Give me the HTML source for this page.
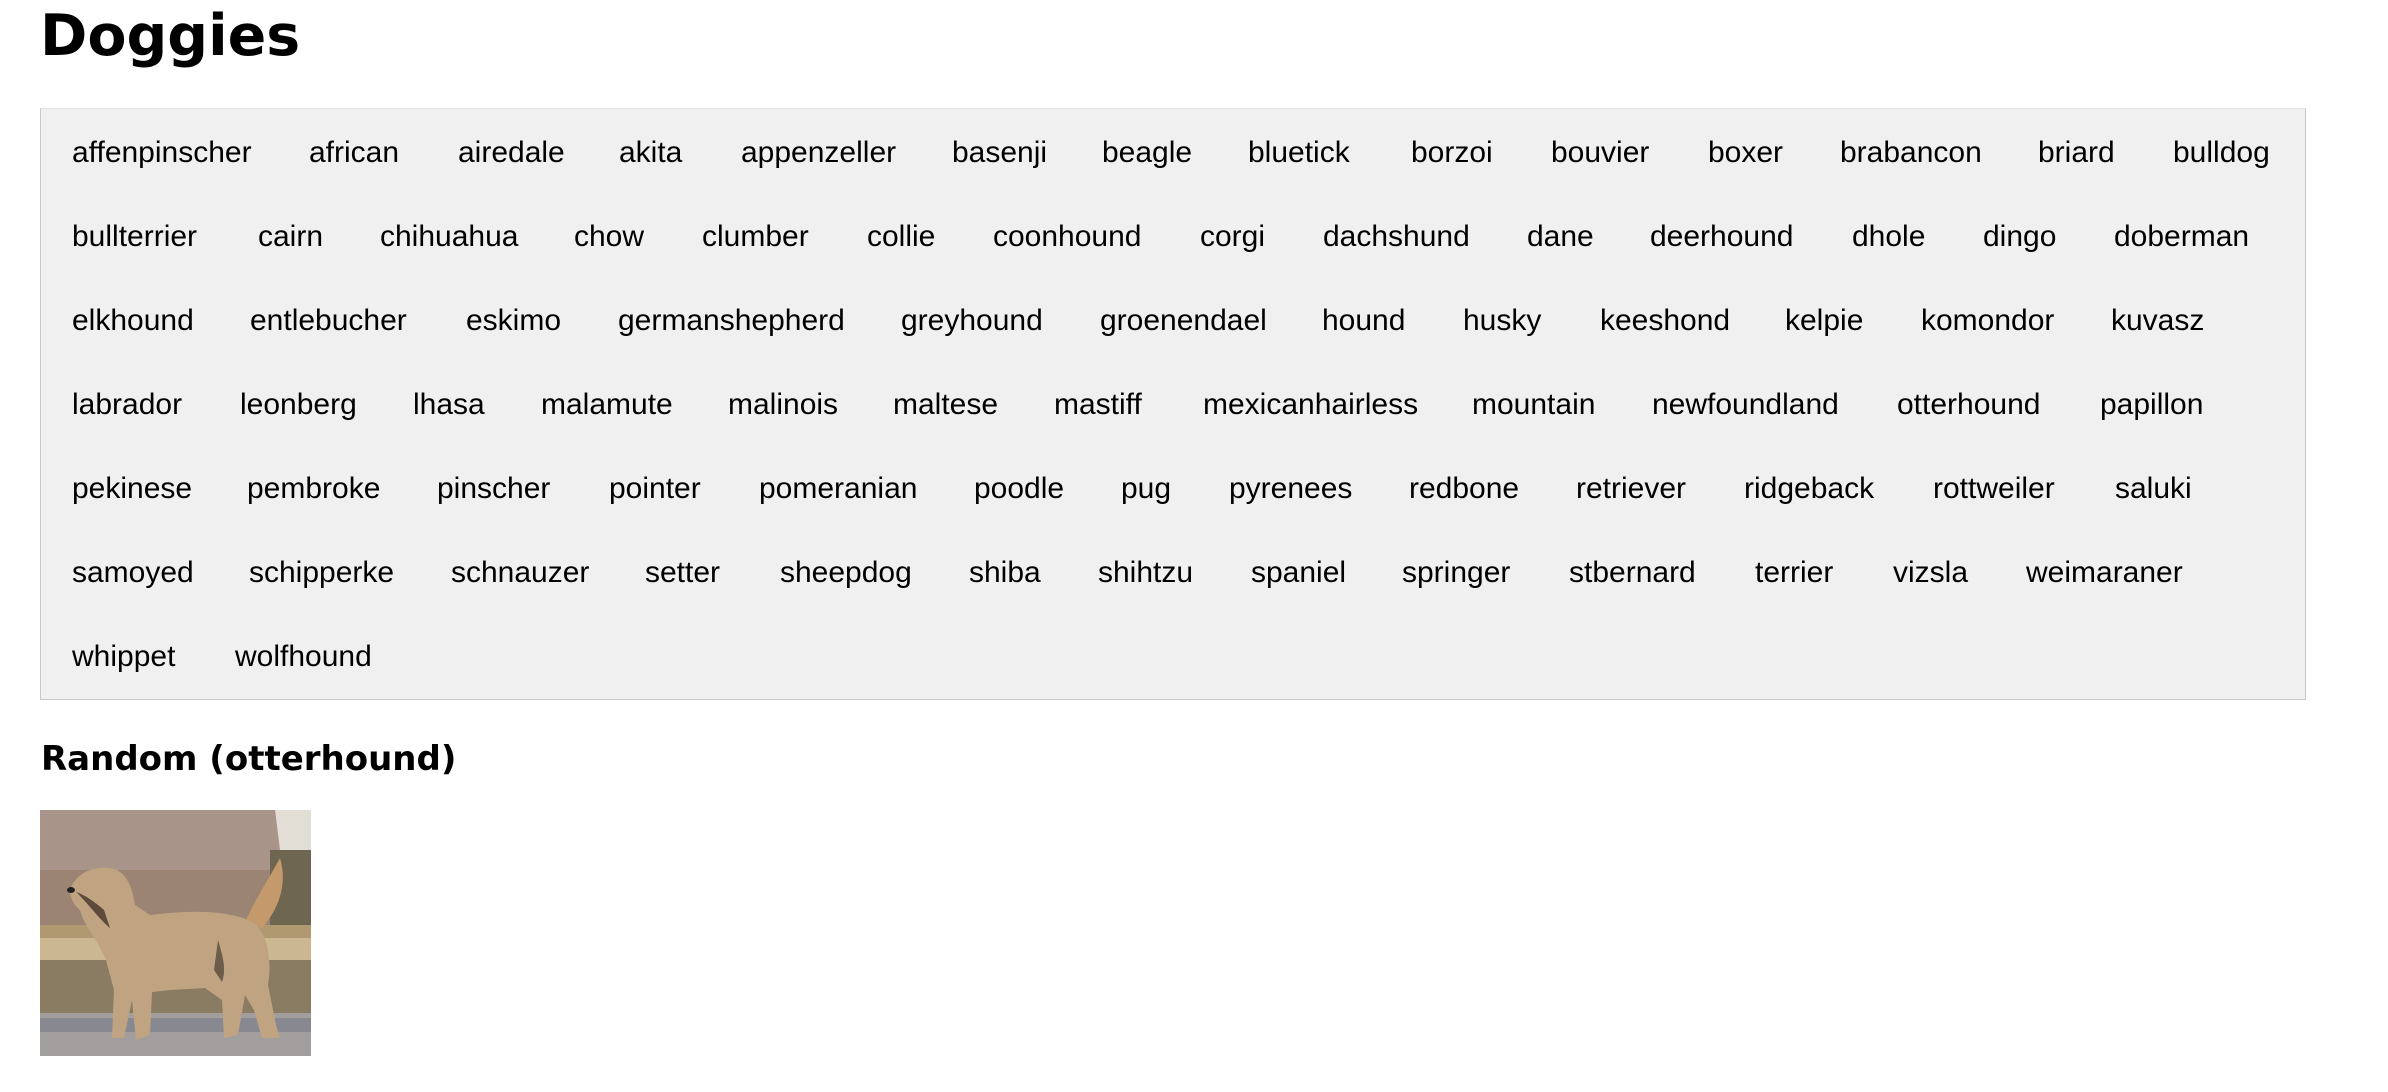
<!DOCTYPE html>
<html><head><meta charset="utf-8">
<style>
html,body{margin:0;padding:0;background:#fff;width:2388px;height:1092px;overflow:hidden}
body{position:relative;font-family:"Liberation Sans",Arial,sans-serif;color:#000}
h1{position:absolute;left:40px;top:0;margin:0;font-family:"DejaVu Sans",Verdana,sans-serif;font-weight:bold;font-size:57px;line-height:72px}
.box{position:absolute;left:40px;top:108px;width:2264px;height:590px;background:#f0f0f0;border:1px solid #c8c8c8;border-top-color:#e4e4e4}
.box span{position:absolute;font-size:30px;line-height:34px;white-space:nowrap;margin-top:-3px}
h2{position:absolute;left:41px;top:737px;margin:0;font-family:"DejaVu Sans",Verdana,sans-serif;font-weight:bold;font-size:34px;line-height:44px}
.img{position:absolute;left:40px;top:810px;width:271px;height:246px}
</style></head><body>
<h1>Doggies</h1>
<div class="box">
<span style="left:31px;top:30px">affenpinscher</span>
<span style="left:268px;top:30px">african</span>
<span style="left:417px;top:30px">airedale</span>
<span style="left:578px;top:30px">akita</span>
<span style="left:700px;top:30px">appenzeller</span>
<span style="left:911px;top:30px">basenji</span>
<span style="left:1061px;top:30px">beagle</span>
<span style="left:1207px;top:30px">bluetick</span>
<span style="left:1370px;top:30px">borzoi</span>
<span style="left:1510px;top:30px">bouvier</span>
<span style="left:1667px;top:30px">boxer</span>
<span style="left:1799px;top:30px">brabancon</span>
<span style="left:1997px;top:30px">briard</span>
<span style="left:2132px;top:30px">bulldog</span>

<span style="left:31px;top:114px">bullterrier</span>
<span style="left:217px;top:114px">cairn</span>
<span style="left:339px;top:114px">chihuahua</span>
<span style="left:533px;top:114px">chow</span>
<span style="left:661px;top:114px">clumber</span>
<span style="left:826px;top:114px">collie</span>
<span style="left:952px;top:114px">coonhound</span>
<span style="left:1159px;top:114px">corgi</span>
<span style="left:1282px;top:114px">dachshund</span>
<span style="left:1486px;top:114px">dane</span>
<span style="left:1609px;top:114px">deerhound</span>
<span style="left:1811px;top:114px">dhole</span>
<span style="left:1942px;top:114px">dingo</span>
<span style="left:2073px;top:114px">doberman</span>

<span style="left:31px;top:198px">elkhound</span>
<span style="left:209px;top:198px">entlebucher</span>
<span style="left:425px;top:198px">eskimo</span>
<span style="left:577px;top:198px">germanshepherd</span>
<span style="left:860px;top:198px">greyhound</span>
<span style="left:1059px;top:198px">groenendael</span>
<span style="left:1281px;top:198px">hound</span>
<span style="left:1422px;top:198px">husky</span>
<span style="left:1559px;top:198px">keeshond</span>
<span style="left:1744px;top:198px">kelpie</span>
<span style="left:1880px;top:198px">komondor</span>
<span style="left:2070px;top:198px">kuvasz</span>

<span style="left:31px;top:282px">labrador</span>
<span style="left:199px;top:282px">leonberg</span>
<span style="left:372px;top:282px">lhasa</span>
<span style="left:500px;top:282px">malamute</span>
<span style="left:687px;top:282px">malinois</span>
<span style="left:852px;top:282px">maltese</span>
<span style="left:1013px;top:282px">mastiff</span>
<span style="left:1162px;top:282px">mexicanhairless</span>
<span style="left:1431px;top:282px">mountain</span>
<span style="left:1611px;top:282px">newfoundland</span>
<span style="left:1856px;top:282px">otterhound</span>
<span style="left:2059px;top:282px">papillon</span>

<span style="left:31px;top:366px">pekinese</span>
<span style="left:206px;top:366px">pembroke</span>
<span style="left:396px;top:366px">pinscher</span>
<span style="left:568px;top:366px">pointer</span>
<span style="left:718px;top:366px">pomeranian</span>
<span style="left:933px;top:366px">poodle</span>
<span style="left:1080px;top:366px">pug</span>
<span style="left:1188px;top:366px">pyrenees</span>
<span style="left:1368px;top:366px">redbone</span>
<span style="left:1535px;top:366px">retriever</span>
<span style="left:1703px;top:366px">ridgeback</span>
<span style="left:1892px;top:366px">rottweiler</span>
<span style="left:2074px;top:366px">saluki</span>

<span style="left:31px;top:450px">samoyed</span>
<span style="left:208px;top:450px">schipperke</span>
<span style="left:410px;top:450px">schnauzer</span>
<span style="left:604px;top:450px">setter</span>
<span style="left:739px;top:450px">sheepdog</span>
<span style="left:928px;top:450px">shiba</span>
<span style="left:1057px;top:450px">shihtzu</span>
<span style="left:1210px;top:450px">spaniel</span>
<span style="left:1361px;top:450px">springer</span>
<span style="left:1528px;top:450px">stbernard</span>
<span style="left:1714px;top:450px">terrier</span>
<span style="left:1852px;top:450px">vizsla</span>
<span style="left:1985px;top:450px">weimaraner</span>

<span style="left:31px;top:534px">whippet</span>
<span style="left:194px;top:534px">wolfhound</span>
</div>
<h2>Random (otterhound)</h2>
<svg class="img" viewBox="0 0 271 246" preserveAspectRatio="none">
<rect width="271" height="246" fill="#9c8474"/>
<rect x="0" y="0" width="271" height="60" fill="#a89488"/>
<path d="M235 0 L271 0 L271 48 L240 40 Z" fill="#e2ded6"/>
<rect x="230" y="40" width="41" height="90" fill="#6e6650"/>
<rect x="0" y="115" width="271" height="18" fill="#b09870"/>
<rect x="0" y="128" width="271" height="22" fill="#ccb890"/>
<rect x="0" y="150" width="271" height="55" fill="#8a7c62"/>
<rect x="0" y="203" width="271" height="43" fill="#a29e9e"/>
<rect x="0" y="208" width="271" height="14" fill="#888890"/>
<path d="M205 112 C215 90 228 70 240 48 C248 75 238 100 222 118 Z" fill="#c49a6c"/>
<path d="M30 80 C35 65 50 56 70 58 C85 60 92 75 95 95 L110 105 C150 100 190 100 212 112 C228 122 232 150 228 175 L236 215 L240 228 L222 228 L214 200 L205 185 L198 225 L184 228 L182 190 L165 178 L130 180 L112 182 L110 225 L96 230 L92 190 L84 228 L72 228 L74 180 L66 150 C58 130 45 118 40 100 C34 95 30 88 30 80 Z" fill="#c0a482"/>
<path d="M36 82 C45 90 60 110 70 118 L64 100 C55 92 45 85 36 82 Z" fill="#5e4a3c"/>
<path d="M178 130 C184 150 186 160 182 172 L174 160 Z" fill="#6e5c4a"/>
<ellipse cx="31" cy="80" rx="4" ry="3" fill="#222"/>
</svg>
</body></html>
